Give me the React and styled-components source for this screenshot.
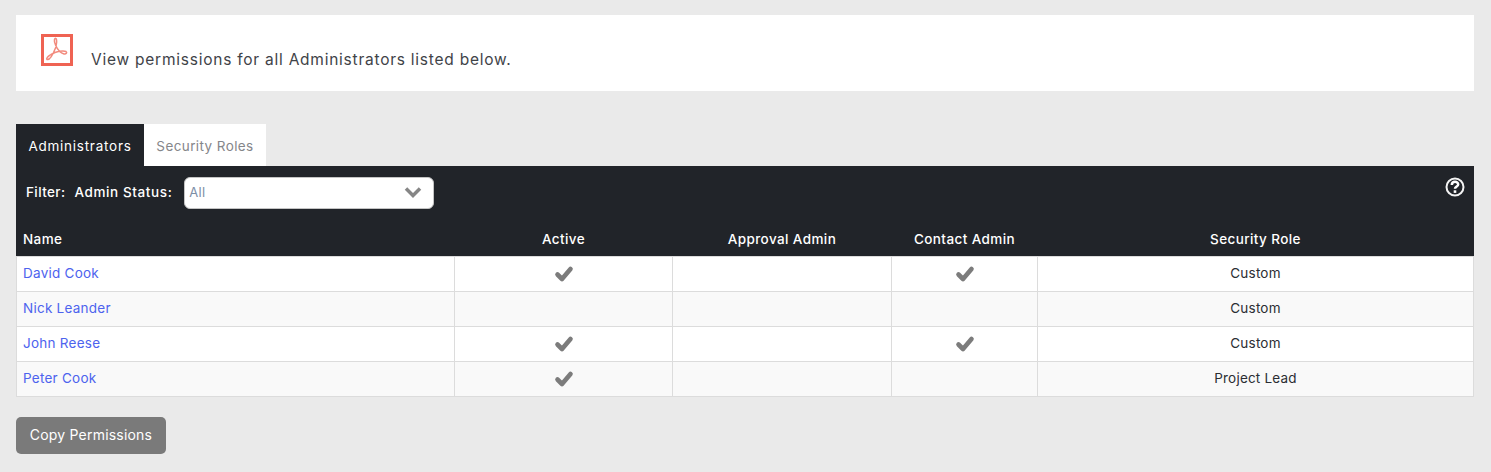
import React from "react";
import styled, { createGlobalStyle } from "styled-components";

const Global = createGlobalStyle`
  html, body { margin: 0; padding: 0; background: #eaeaea; }
  body { font-family: "Inter", "Liberation Sans", sans-serif; font-size: 13.5px; }
  * { box-sizing: border-box; }
`;
const Page = styled.div`
  padding: 15px 17px 18px 16px;
  display: flex;
  flex-direction: column;
`;
const Notice = styled.div`
  height: 76px;
  background: #fff;
  display: flex;
  align-items: flex-start;
  padding: 19px 0 0 25px;
  margin-bottom: 33px;
`;
const NoticeText = styled.span`
  margin: 16px 0 0 18px;
  font-size: 15.5px;
  line-height: 20px;
  letter-spacing: 0.76px;
  color: #3f4348;
`;
const Tabs = styled.div`
  display: flex;
  height: 42px;
`;
const Tab = styled.div`
  width: ${p => p.$w}px;
  padding-top: 2px;
  display: flex;
  align-items: center;
  justify-content: center;
  font-size: 13.5px;
  letter-spacing: ${p => (p.$active ? "0.75px" : "0.4px")};
  background: ${p => (p.$active ? "#212429" : "#fff")};
  color: ${p => (p.$active ? "#fff" : "#85868a")};
`;
const Toolbar = styled.div`
  height: 56px;
  background: #212429;
  color: #fff;
  padding: 11px 10px 0;
`;
const FilterRow = styled.div`
  display: flex;
  align-items: center;
  height: 32px;
  font-size: 13.5px;
  letter-spacing: 0.4px;
  font-weight: 500;
`;
const FilterLabel = styled.span`
  margin-right: 9px;
  margin-top: -2px;
`;
const StatusLabel = styled.span`
  letter-spacing: 0.6px;
  margin-right: 12px;
  margin-top: -2px;
`;
const SelectBox = styled.div`
  width: 250px;
  height: 32px;
  background: #fff;
  border: 1px solid #c4c4c4;
  border-radius: 6px;
  padding: 0 11px 2px 4px;
  display: flex;
  align-items: center;
  justify-content: space-between;
  color: #7d8ea6;
  font-weight: 400;
  font-size: 13px;
  letter-spacing: 0.3px;
`;
const Help = styled.svg`
  margin-left: auto;
  margin-top: -12px;
  margin-right: -1px;
`;
const Grid = styled.table`
  width: 100%;
  border-collapse: collapse;
  table-layout: fixed;
  background: #fff;
`;
const HeadCell = styled.th`
  height: 34px;
  padding: 0 6px 2px;
  background: #212429;
  border: 1px solid #212429;
  border-bottom-color: #dcdcdc;
  color: #fff;
  font-size: 13.5px;
  font-weight: 500;
  letter-spacing: 0.4px;
  text-align: ${p => (p.$left ? "left" : "center")};
`;
const Row = styled.tr`
  background: ${p => (p.$alt ? "#f9f9f9" : "#fff")};
`;
const Cell = styled.td`
  height: 35px;
  padding: 0 6px 2px;
  border: 1px solid #dcdcdc;
  text-align: ${p => (p.$left ? "left" : "center")};
  font-size: 13.5px;
  letter-spacing: 0.2px;
  color: #2b2e33;
`;
const NameLink = styled.a`
  color: #4d63ee;
  text-decoration: none;
  letter-spacing: 0.25px;
`;
const CheckIcon = styled.svg`
  display: block;
  margin: 2px auto 0;
`;
const CopyButton = styled.button`
  align-self: flex-start;
  width: 150px;
  height: 37px;
  margin-top: 20px;
  padding: 0 0 2px;
  border: 0;
  border-radius: 5px;
  background: #7a7a7a;
  color: #fff;
  font-family: inherit;
  font-size: 14px;
  font-weight: 400;
  letter-spacing: 0.2px;
`;

const PdfIcon = () => (
  <svg width="32" height="32" viewBox="0 0 32 32" fill="none">
    <rect x="1.5" y="1.5" width="29" height="29" fill="#fff" stroke="#ef6353" strokeWidth="3" />
    <path
      d="M6 25.5c2.500 1 6-5 8.500-11.500 1-3.500 1.500-8 .5-9.500-1.500-1-2.500 2.500-.5 6.500 2 4.500 5 8 8.500 9 2 .5 3.500-1.500 2-2.500-3-1.500-10 0-15 3-2 1.500-5.500 3.500-4 5z"
      stroke="#f28b7e"
      strokeWidth="1.5"
    />
  </svg>
);
const Check = () => (
  <CheckIcon width="20" height="18" viewBox="0 0 20 18">
    <path d="M3.5 9.5 L8 14 L16.5 4" fill="none" stroke="#7c7c7c" strokeWidth="4.600" strokeLinejoin="round" strokeLinecap="round" />
  </CheckIcon>
);
const Chevron = () => (
  <svg width="18" height="12" viewBox="0 0 18 12">
    <path d="M2 2.500 L9 9.500 L16 2.500" fill="none" stroke="#868686" strokeWidth="3.500" />
  </svg>
);

const rows = [
  ["David Cook", true, true, "Custom"],
  ["Nick Leander", false, false, "Custom"],
  ["John Reese", true, true, "Custom"],
  ["Peter Cook", true, false, "Project Lead"],
];

export default function App() {
  return (
    <Page>
      <Global />
      <Notice>
        <PdfIcon />
        <NoticeText>View permissions for all Administrators listed below.</NoticeText>
      </Notice>
      <Tabs>
        <Tab $active $w={128}>Administrators</Tab>
        <Tab $w={122}>Security Roles</Tab>
      </Tabs>
      <Toolbar>
        <FilterRow>
          <FilterLabel>Filter:</FilterLabel>
          <StatusLabel>Admin Status:</StatusLabel>
          <SelectBox>
            All
            <Chevron />
          </SelectBox>
          <Help width="20" height="20" viewBox="0 0 20 20">
            <circle cx="10" cy="10" r="8.5" fill="none" stroke="#f4f4f4" strokeWidth="2" />
            <path d="M6.800 8c0-4.200 6.400-4.200 6.400-.5 0 2-3.200 2-3.200 4.300" fill="none" stroke="#fff" strokeWidth="2.500" />
            <rect x="8.700" y="13.300" width="2.600" height="2.600" fill="#fff" />
          </Help>
        </FilterRow>
      </Toolbar>
      <Grid>
        <colgroup>
          <col width="438" />
          <col width="218" />
          <col width="219" />
          <col width="146" />
          <col />
        </colgroup>
        <thead>
          <tr>
            <HeadCell $left>Name</HeadCell>
            <HeadCell>Active</HeadCell>
            <HeadCell>Approval Admin</HeadCell>
            <HeadCell>Contact Admin</HeadCell>
            <HeadCell>Security Role</HeadCell>
          </tr>
        </thead>
        <tbody>
          {rows.map((r, i) => (
            <Row key={r[0]} $alt={i % 2 === 1}>
              <Cell $left>
                <NameLink href="#">{r[0]}</NameLink>
              </Cell>
              <Cell>{r[1] && <Check />}</Cell>
              <Cell />
              <Cell>{r[2] && <Check />}</Cell>
              <Cell>{r[3]}</Cell>
            </Row>
          ))}
        </tbody>
      </Grid>
      <CopyButton>Copy Permissions</CopyButton>
    </Page>
  );
}
